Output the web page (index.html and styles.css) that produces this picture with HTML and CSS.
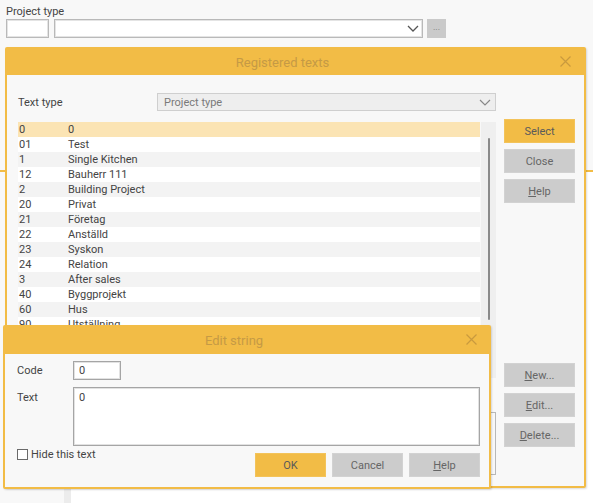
FILE: index.html
```html
<!DOCTYPE html>
<html>
<head>
<meta charset="utf-8">
<title>Registered texts</title>
<link rel="stylesheet" href="styles.css">
</head>
<body>
<div class="page">
  <div class="top-form">
    <div class="field-label">Project type</div>
    <div class="field-row">
      <div class="input code-input"></div>
      <div class="input select-input">
        <svg class="chev" width="12" height="7" viewBox="0 0 12 7"><path d="M1 1 L6 6 L11 1" fill="none" stroke="#555" stroke-width="1.3"/></svg>
      </div>
      <div class="dots-btn">...</div>
    </div>
  </div>
  <div class="workspace">
    <div class="side"></div>
    <div class="divider"></div>
    <div class="main"></div>
  </div>
</div>

<div class="dialog reg-dialog">
  <div class="dlg-title">
    <span class="dlg-title-text">Registered texts</span>
    <svg class="dlg-close" width="11" height="11" viewBox="0 0 11 11"><path d="M0.5 0.5 L10.5 10.5 M10.5 0.5 L0.5 10.5" stroke="#c99a3e" stroke-width="1.2"/></svg>
  </div>
  <div class="reg-body">
    <div class="type-row">
      <span class="lbl">Text type</span>
      <div class="type-select">
        <span>Project type</span>
        <svg width="12" height="7" viewBox="0 0 12 7"><path d="M1 1 L6 6 L11 1" fill="none" stroke="#888" stroke-width="1.2"/></svg>
      </div>
    </div>
    <div class="left-col">
      <div class="list">
        <div class="rows">
          <div class="row sel"><span class="c">0</span><span>0</span></div>
          <div class="row"><span class="c">01</span><span>Test</span></div>
          <div class="row"><span class="c">1</span><span>Single Kitchen</span></div>
          <div class="row"><span class="c">12</span><span>Bauherr 111</span></div>
          <div class="row"><span class="c">2</span><span>Building Project</span></div>
          <div class="row"><span class="c">20</span><span>Privat</span></div>
          <div class="row"><span class="c">21</span><span>Företag</span></div>
          <div class="row"><span class="c">22</span><span>Anställd</span></div>
          <div class="row"><span class="c">23</span><span>Syskon</span></div>
          <div class="row"><span class="c">24</span><span>Relation</span></div>
          <div class="row"><span class="c">3</span><span>After sales</span></div>
          <div class="row"><span class="c">40</span><span>Byggprojekt</span></div>
          <div class="row"><span class="c">60</span><span>Hus</span></div>
          <div class="row"><span class="c">90</span><span>Utställning</span></div>
        </div>
        <div class="track"><div class="thumb"></div></div>
      </div>
      <div class="preview"></div>
    </div>
    <div class="btn-col">
      <button class="btn primary">Select</button>
      <button class="btn">Close</button>
      <button class="btn"><u>H</u>elp</button>
      <button class="btn gap-top"><u>N</u>ew...</button>
      <button class="btn"><u>E</u>dit...</button>
      <button class="btn"><u>D</u>elete...</button>
    </div>
  </div>
</div>

<div class="dialog edit-dialog">
  <div class="dlg-title edit-title">
    <span class="dlg-title-text">Edit string</span>
    <svg class="dlg-close" width="11" height="11" viewBox="0 0 11 11"><path d="M0.5 0.5 L10.5 10.5 M10.5 0.5 L0.5 10.5" stroke="#c99a3e" stroke-width="1.2"/></svg>
  </div>
  <div class="edit-body">
    <span class="lbl code-lbl">Code</span>
    <div class="edit-input">0</div>
    <span class="lbl text-lbl">Text</span>
    <div class="edit-area">0</div>
    <div class="edit-footer">
      <label class="check"><span class="box"></span><span>Hide this text</span></label>
      <div class="edit-btns">
        <button class="btn primary">OK</button>
        <button class="btn">Cancel</button>
        <button class="btn"><u>H</u>elp</button>
      </div>
    </div>
  </div>
</div>
</body>
</html>
```

FILE: styles.css
```css
* { box-sizing: border-box; }
html, body { margin: 0; padding: 0; }
body {
  width: 593px;
  height: 503px;
  overflow: hidden;
  background: #f8f8f8;
  font-family: Roboto, "Liberation Sans", sans-serif;
  font-size: 11px;
  color: #444;
  position: relative;
}

.page { display: flex; flex-direction: column; height: 503px; }

.top-form { height: 170px; padding: 5px 6px 0; }
.field-label { line-height: 14px; height: 14px; color: #444; }
.field-row { display: flex; height: 19px; }
.input { background: #fff; border: 1px solid #b9b9b9; box-shadow: inset 0 0 0 1px #e4e4e4; }
.code-input { width: 43px; }
.select-input {
  width: 369px; margin-left: 5px;
  display: flex; align-items: center; justify-content: flex-end; padding-right: 3px;
}
.dots-btn {
  width: 19px; margin-left: 4px; background: #cacaca; color: #777;
  font-size: 9px; line-height: 17px; text-align: center;
}

.workspace { flex: 1; display: flex; border-top: 2px solid #f2bc46; }
.side { width: 64px; background: #f8f8f8; }
.divider { width: 7px; background: #ececec; }
.main { flex: 1; background: #fff; }

.dialog {
  position: absolute;
  border: 2px solid #f2bc46;
  border-radius: 2px;
  background: #f8f8f8;
  box-shadow: 1px 1px 2px rgba(0,0,0,0.14);
  display: flex; flex-direction: column;
}
.reg-dialog { left: 5px; top: 47px; width: 581px; height: 441px; }
.edit-dialog { left: 3px; top: 325px; width: 488px; height: 164px; }

.dlg-title {
  height: 26px; background: #f2bc46; flex: none;
  display: flex; align-items: center; justify-content: center; position: relative;
  padding-right: 26px;
}
.edit-title { height: 27px; }
.dlg-title-text { font-size: 13px; color: #c59a45; }
.dlg-close { position: absolute; right: 13px; top: 7px; }
.edit-title .dlg-close { right: 12px; top: 7px; }

.reg-body {
  flex: 1;
  padding: 18px 9px 0 11px;
  display: grid;
  grid-template-columns: 478px 71px;
  grid-template-rows: 18px auto;
  column-gap: 8px;
  row-gap: 8px;
  align-content: start;
}
.type-row { grid-column: 1; grid-row: 1; display: flex; align-items: center; }
.left-col { grid-column: 1; grid-row: 2; display: flex; flex-direction: column; }
.btn-col { grid-column: 2; grid-row: 2; display: flex; flex-direction: column; gap: 6px; }
.lbl { color: #444; }
.type-row .lbl { width: 139px; }
.type-select {
  flex: 1; height: 18px; background: #eeeeee; border: 1px solid #cfcfcf;
  display: flex; align-items: center; justify-content: space-between;
  padding: 0 4px 0 6px; color: #7a7a7a;
}
.list { margin-top: 3px; height: 256px; display: flex; gap: 1px; overflow: hidden; }
.rows { width: 462px; display: flex; flex-direction: column; background: #fff; }
.row { height: 15px; flex: none; display: flex; align-items: center; line-height: 15px; background: #fff; color: #444; }
.row:nth-child(odd) { background: #f3f3f3; }
.row.sel { background: #fbe4b4; }
.row .c { width: 50px; padding-left: 1px; }
.track { width: 15px; background: #efefef; position: relative; }
.thumb { position: absolute; left: 7px; top: 16px; width: 2px; height: 182px; background: #8a8a8a; border-radius: 1px; }
.preview { margin-top: 34px; height: 63px; border: 1px solid #b8b8b8; background: #f8f8f8; }

.btn {
  font: inherit; font-size: 11px; color: #666; background: #cccccc;
  border: 1px solid #d2d2d2; height: 24px; width: 71px; padding: 0; margin: 0;
  display: flex; align-items: center; justify-content: center;
}
.btn u { text-decoration: underline; }
.btn.primary { background: #f2bc46; border-color: #f3c35a; color: #5a5a5a; }
.gap-top { margin-top: 154px; }

.edit-body {
  flex: 1;
  padding: 7px 9px 0 12px;
  display: grid;
  grid-template-columns: 56px 1fr;
  row-gap: 7px;
  align-content: start;
}
.code-lbl { align-self: center; }
.text-lbl { padding-top: 4px; }
.edit-input {
  width: 48px; height: 19px; background: #fff; border: 1px solid #a5a5a5;
  box-shadow: inset 0 0 0 1px #e2e2e2; padding: 0 5px; line-height: 17px; color: #444;
}
.edit-area {
  height: 59px; background: #fff; border: 1px solid #a5a5a5;
  box-shadow: inset 0 0 0 1px #e2e2e2; padding: 3px 5px; color: #444;
}
.edit-footer {
  grid-column: 1 / 3; margin-top: -5px;
  display: flex; justify-content: space-between; align-items: flex-start;
}
.check { display: flex; align-items: center; gap: 3px; color: #444; }
.box { width: 11px; height: 11px; border: 1px solid #6a6a6a; background: #fff; }
.edit-btns { display: flex; gap: 6px; margin-top: 5px; }
```
